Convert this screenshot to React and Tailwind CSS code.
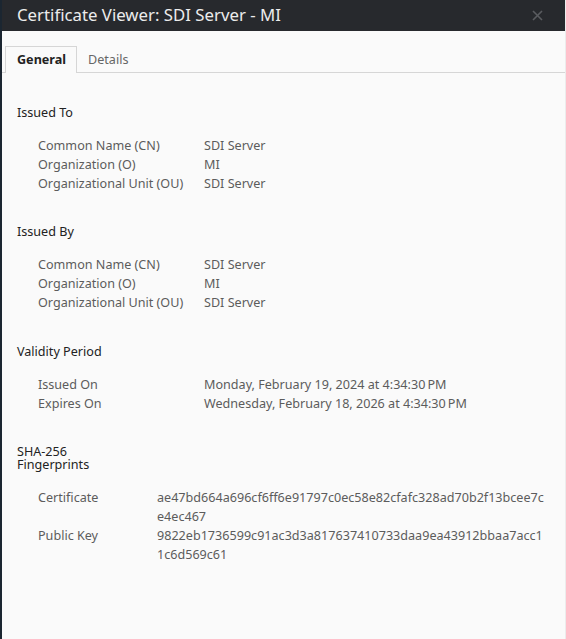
import React from "react";

const font = { fontFamily: '"Noto Sans", "Open Sans", sans-serif' };

function Row({ label, value, labelW }) {
  return (
    <div className="flex text-[12.6px] leading-[19px] text-[#5c5c5c]">
      <div className={labelW}>{label}</div>
      <div className="flex-1 break-all pr-[17.5px]">{value}</div>
    </div>
  );
}

function Section({ title, rows, labelW = "w-[166px] shrink-0", titleW = "" }) {
  return (
    <div className="mb-[32.5px]">
      <div className={`text-[12.6px] leading-[13px] text-[#222] mb-[17px] ${titleW}`}>{title}</div>
      <div className="pl-[21px]">
        {rows.map((r) => (
          <Row key={r[0]} label={r[0]} value={r[1]} labelW={labelW} />
        ))}
      </div>
    </div>
  );
}

export default function App() {
  return (
    <div className="w-[566px] h-[639px] flex bg-[#1b2631] overflow-hidden" style={font}>
      <div className="w-[2px] shrink-0" />
      <div className="flex-1 flex flex-col bg-[#fafafa] border-r border-[#ececec]">
        <div className="h-[31px] shrink-0 bg-[#27292d] flex items-center justify-between pl-[15px] pr-[22px]">
          <span className="text-[16.8px] text-[#ececec] leading-none">Certificate Viewer: SDI Server - MI</span>
          <svg width="11" height="11" viewBox="0 0 11 11" className="text-[#5a5c60]">
            <path d="M1 1L10 10M10 1L1 10" stroke="currentColor" strokeWidth="1.6" />
          </svg>
        </div>
        <div className="mt-[15px] flex items-end border-b border-[#d6d6d6] h-[27px] shrink-0">
          <div className="ml-[3px] w-[72px] h-[27px] pl-[11px] flex items-center border border-b-0 border-[#d6d6d6] bg-[#fafafa] -mb-px text-[12.6px] font-bold text-[#222]">
            General
          </div>
          <div className="h-[27px] pl-[11px] flex items-center border-t border-transparent -mb-px text-[12.6px] text-[#666]">Details</div>
        </div>
        <div className="pl-[15px] pt-[32.5px]">
          <Section
            title="Issued To"
            rows={[
              ["Common Name (CN)", "SDI Server"],
              ["Organization (O)", "MI"],
              ["Organizational Unit (OU)", "SDI Server"],
            ]}
          />
          <Section
            title="Issued By"
            rows={[
              ["Common Name (CN)", "SDI Server"],
              ["Organization (O)", "MI"],
              ["Organizational Unit (OU)", "SDI Server"],
            ]}
          />
          <Section
            title="Validity Period"
            rows={[
              ["Issued On", "Monday, February 19, 2024 at 4:34:30\u202fPM"],
              ["Expires On", "Wednesday, February 18, 2026 at 4:34:30\u202fPM"],
            ]}
          />
          <Section
            title="SHA-256 Fingerprints"
            titleW="w-[80px]"
            labelW="w-[119px] shrink-0"
            rows={[
              ["Certificate", "ae47bd664a696cf6ff6e91797c0ec58e82cfafc328ad70b2f13bcee7ce4ec467"],
              ["Public Key", "9822eb1736599c91ac3d3a817637410733daa9ea43912bbaa7acc11c6d569c61"],
            ]}
          />
        </div>
      </div>
    </div>
  );
}
